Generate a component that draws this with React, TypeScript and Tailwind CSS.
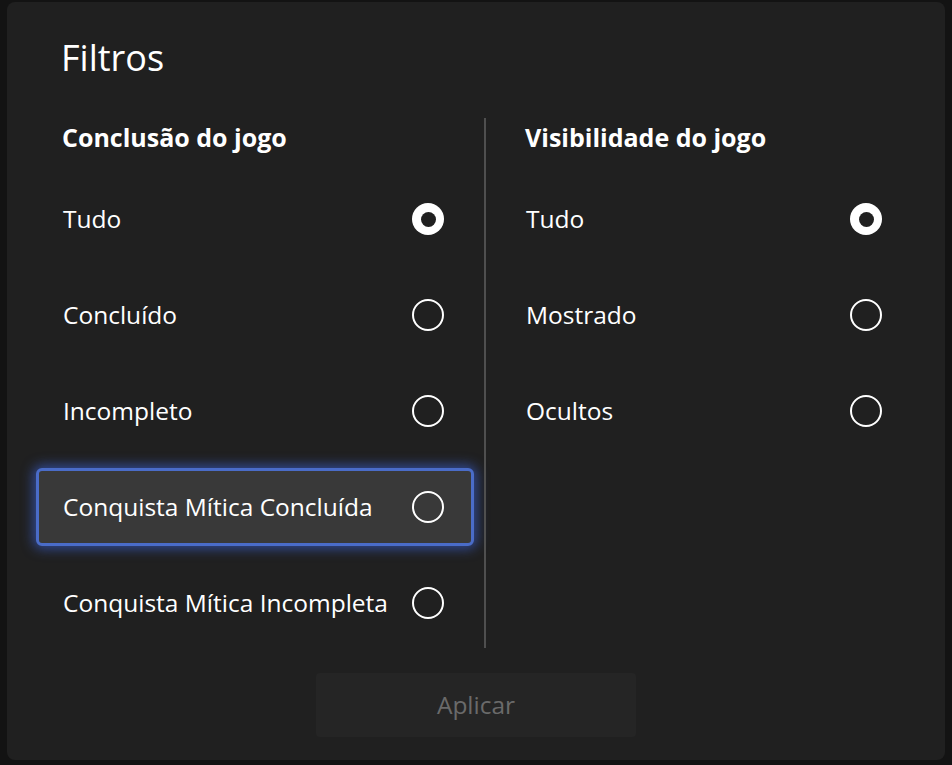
import { useState } from "react";

type Option = { readonly value: string; readonly label: string };

const completionOptions: readonly Option[] = [
  { value: "all", label: "Tudo" },
  { value: "done", label: "Concluído" },
  { value: "incomplete", label: "Incompleto" },
  { value: "mythic-done", label: "Conquista Mítica Concluída" },
  { value: "mythic-incomplete", label: "Conquista Mítica Incompleta" },
];

const visibilityOptions: readonly Option[] = [
  { value: "all", label: "Tudo" },
  { value: "shown", label: "Mostrado" },
  { value: "hidden", label: "Ocultos" },
];

function Radio({ checked }: { readonly checked: boolean }) {
  return checked ? (
    <span className="flex h-8 w-8 shrink-0 items-center justify-center rounded-full bg-white">
      <span className="h-[15px] w-[15px] rounded-full bg-[#202020]" />
    </span>
  ) : (
    <span className="h-8 w-8 shrink-0 rounded-full border-2 border-white" />
  );
}

function OptionGroup({
  title,
  options,
  selected,
  focused,
  onSelect,
  className,
}: {
  readonly title: string;
  readonly options: readonly Option[];
  readonly selected: string;
  readonly focused?: string;
  readonly onSelect: (value: string) => void;
  readonly className: string;
}) {
  return (
    <div className={className}>
      <h3 className="h-[38px] pl-[26px] text-[25px] font-bold leading-[38px] text-white">{title}</h3>
      <div className="mt-[24px] flex flex-col gap-[18px]">
        {options.map((option) => {
          const isFocused = option.value === focused;
          return (
            <button
              key={option.value}
              type="button"
              onClick={() => onSelect(option.value)}
              className={
                isFocused
                  ? "flex h-[78px] items-center justify-between rounded-[6px] border-[3px] border-[#4a6cc8] bg-[#393939] pl-[24px] pr-[27px] text-left shadow-[0_0_12px_3px_rgba(60,100,220,0.6)]"
                  : "flex h-[78px] items-center justify-between rounded-[6px] border-[3px] border-transparent pl-[24px] pr-[27px] text-left"
              }
            >
              <span className="text-[24.5px] leading-none text-white">{option.label}</span>
              <Radio checked={option.value === selected} />
            </button>
          );
        })}
      </div>
    </div>
  );
}

export default function App() {
  const [completion, setCompletion] = useState("all");
  const [visibility, setVisibility] = useState("all");

  return (
    <div
      className="h-[765px] w-[952px] overflow-hidden bg-[#131313] pl-[7px] pt-[2px]"
      style={{ fontFamily: '"Open Sans", "Noto Sans", sans-serif' }}
    >
      <div className="flex h-[758px] w-[938px] flex-col rounded-[8px] bg-[#202020]">
        <h2 className="pl-[54px] pt-[36px] text-[36px] leading-[40px] text-white">Filtros</h2>

        <div className="mt-[40px] flex h-[530px] pl-[29px]">
          <OptionGroup
            className="w-[438px]"
            title="Conclusão do jogo"
            options={completionOptions}
            selected={completion}
            focused="mythic-done"
            onSelect={setCompletion}
          />
          <div className="ml-[10px] mr-[13px] w-[2px] bg-[#4f4f4f]" />
          <OptionGroup
            className="w-[413px]"
            title="Visibilidade do jogo"
            options={visibilityOptions}
            selected={visibility}
            onSelect={setVisibility}
          />
        </div>

        <div className="mt-[25px] flex justify-center">
          <button
            type="button"
            disabled
            className="h-[64px] w-[320px] rounded-[4px] bg-[#252525] text-[24.5px] text-[#6a6a6a]"
          >
            Aplicar
          </button>
        </div>
      </div>
    </div>
  );
}
